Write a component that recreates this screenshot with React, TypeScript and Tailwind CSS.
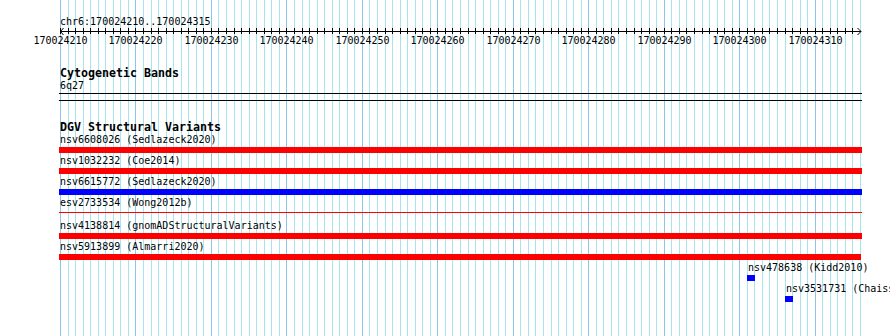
const START = 170024210;
const END = 170024315;
const LEFT = 60;
const PX_PER_BASE = 800 / (END - START + 1);

const baseX = (pos: number) => Math.round(LEFT + (pos - START) * PX_PER_BASE);

type Variant = {
  name: string;
  study: string;
  color: "red" | "blue";
  kind: "bar" | "line" | "box";
  start?: number;
  width?: number;
};

const variants: Variant[] = [
  { name: "nsv6608026", study: "Sedlazeck2020", color: "red", kind: "bar", width: 803 },
  { name: "nsv1032232", study: "Coe2014", color: "red", kind: "bar", width: 803 },
  { name: "nsv6615772", study: "Sedlazeck2020", color: "blue", kind: "bar", width: 803 },
  { name: "esv2733534", study: "Wong2012b", color: "red", kind: "line", width: 803 },
  { name: "nsv4138814", study: "gnomADStructuralVariants", color: "red", kind: "bar", width: 803 },
  { name: "nsv5913899", study: "Almarri2020", color: "red", kind: "bar", width: 802 },
  { name: "nsv478638", study: "Kidd2010", color: "blue", kind: "box", start: 170024301 },
  { name: "nsv3531731", study: "Chaisson2019", color: "blue", kind: "box", start: 170024306 },
];

function Grid() {
  const lines = [];
  for (let i = 0; i <= END - START + 1; i++) {
    const x = baseX(START + i) + 0.5;
    const major = i % 10 === 0;
    lines.push(
      <line
        key={i}
        x1={x}
        x2={x}
        y1={0}
        y2={336}
        stroke={major ? "#8cc6e6" : "#a6e4ee"}
        strokeWidth={1}
      />
    );
  }
  return (
    <svg className="absolute inset-0" width={890} height={336} shapeRendering="crispEdges" aria-hidden>
      {lines}
    </svg>
  );
}

function Ruler() {
  // local y: axis sits at page y=31, svg top is page y=26
  const ticks = [];
  const labels = [];
  for (let i = 0; i <= END - START; i++) {
    const x = baseX(START + i) + 0.5;
    ticks.push(<line key={i} x1={x} x2={x} y1={2} y2={8} stroke="#000" />);
    if (i % 10 === 0) {
      labels.push(
        <text key={i} x={x} y={18} textAnchor="middle" fontSize={10} fill="#000">
          {START + i}
        </text>
      );
    }
  }
  return (
    <svg width={890} height={24} className="block" style={{ fontFamily: '"DejaVu Sans Mono", monospace' }}>
      <g shapeRendering="crispEdges">
        <line x1={60} x2={861} y1={5.5} y2={5.5} stroke="#000" />
        {ticks}
      </g>
      <polyline points="63.5,2 60.5,5.5 63.5,9" fill="none" stroke="#000" />
      <polyline points="857.5,2 861,5.5 857.5,9" fill="none" stroke="#000" />
      {labels}
    </svg>
  );
}

function VariantRow({ v }: { v: Variant }) {
  const color = v.color === "red" ? "bg-[#ff0000]" : "bg-[#0000ff]";
  const offset = v.kind === "box" && v.start ? baseX(v.start) - 59 : 0;
  return (
    <div style={{ marginLeft: offset }}>
      <div className="h-[15px] leading-[15px] pl-px whitespace-nowrap">
        {v.name} ({v.study})
      </div>
      <div className="h-[6px]">
        {v.kind === "bar" && <div className={`h-[6px] ${color}`} style={{ width: v.width }} />}
        {v.kind === "line" && <div className={`mt-[2px] h-px ${color}`} style={{ width: v.width }} />}
        {v.kind === "box" && <div className={`h-[6px] w-[8px] ${color}`} />}
      </div>
    </div>
  );
}

export default function App() {
  return (
    <div className="relative w-[890px] h-[336px] overflow-hidden bg-white text-black font-['DejaVu_Sans_Mono',monospace] text-[10px]">
      <Grid />
      <div className="relative">
        <div className="pl-[60px] pt-[14px] h-[26px] leading-[15px] whitespace-nowrap">
          chr6:170024210..170024315
        </div>
        <Ruler />

        <div className="pl-[59px]">
          {/* Cytogenetic bands track */}
          <div className="mt-[16px] h-[12px] leading-[15px] pl-px font-bold text-[11.63px] whitespace-nowrap">
            Cytogenetic Bands
          </div>
          <div className="h-[15px] leading-[15px] pl-px">6q27</div>
          <div className="w-[803px] h-[7px] border-t border-black" />
          <div className="w-[803px] h-px bg-black" />

          {/* DGV track */}
          <div className="mt-[19px] h-[12px] leading-[15px] pl-px font-bold text-[11.63px] whitespace-nowrap">
            DGV Structural Variants
          </div>
          {variants.map((v) => (
            <VariantRow key={v.name} v={v} />
          ))}
        </div>
      </div>
    </div>
  );
}
